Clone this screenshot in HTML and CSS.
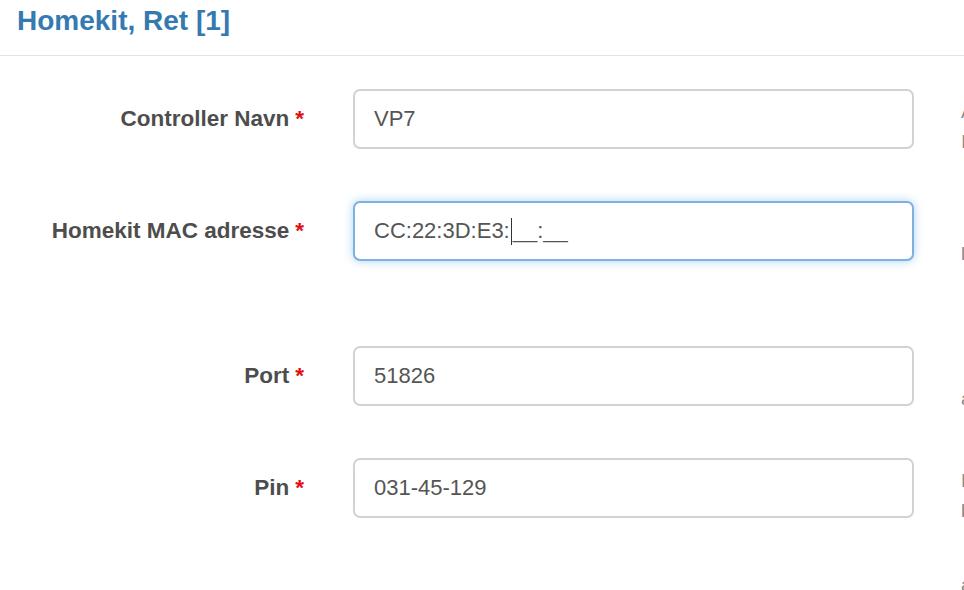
FILE: index.html
```html
<!DOCTYPE html>
<html lang="da">
<head>
<meta charset="utf-8">
<title>Homekit, Ret [1]</title>
<link rel="stylesheet" href="styles.css">
</head>
<body>
<header class="page-header">
  <h1 class="title">Homekit, Ret [1]</h1>
</header>
<form class="form">
  <div class="row">
    <label class="label">Controller Navn <span class="req">*</span></label>
    <div class="field">VP7</div>
    <div class="help">Angiv et navn til controlleren<br>Ikke synligt i Home appen</div>
  </div>
  <div class="row row-tall">
    <label class="label">Homekit MAC adresse <span class="req">*</span></label>
    <div class="field field-focus">CC:22:3D:E3:<span class="caret"></span>__:__</div>
    <div class="help">&nbsp;<br>lokal unik adresse</div>
  </div>
  <div class="row">
    <label class="label">Port <span class="req">*</span></label>
    <div class="field">51826</div>
    <div class="help">&nbsp;<br>angiv port</div>
  </div>
  <div class="row">
    <label class="label">Pin <span class="req">*</span></label>
    <div class="field">031-45-129</div>
    <div class="help">Pinkode til parring<br>bruges i Home appen</div>
  </div>
  <div class="row row-help-only">
    <div class="label"></div>
    <div></div>
    <div class="help">angiv</div>
  </div>
</form>
</body>
</html>
```
FILE: styles.css
```css
html, body {
  margin: 0;
  padding: 0;
  background: #ffffff;
}

body {
  font-family: "Liberation Sans", Arial, Helvetica, sans-serif;
  color: #555555;
  width: 964px;
  height: 590px;
  overflow: hidden;
}

.page-header {
  padding: 4px 17px 17px;
  border-bottom: 1px solid #e3e3e3;
}

.title {
  margin: 0;
  font-size: 28px;
  line-height: 34px;
  font-weight: bold;
  color: #3579b1;
}

.form {
  padding-top: 33px;
}

.row {
  display: grid;
  grid-template-columns: 306px 561px 200px;
  column-gap: 47px;
  margin-bottom: 52px;
  align-items: start;
}

.row-tall {
  margin-bottom: 85px;
}

.row-help-only {
  margin-bottom: 0;
}

.label {
  height: 60px;
  display: flex;
  align-items: center;
  justify-content: flex-end;
  padding-right: 2px;
  font-size: 22.5px;
  font-weight: bold;
  color: #4d4d4d;
  white-space: nowrap;
}

.req {
  color: #e20d0d;
  margin-left: 6px;
}

.field {
  box-sizing: border-box;
  height: 60px;
  display: flex;
  align-items: center;
  padding: 0 19px;
  border: 2px solid #d2d2d2;
  border-radius: 7px;
  font-size: 22px;
  color: #555555;
  background: #ffffff;
  white-space: nowrap;
}

.field-focus {
  border-color: #7fb0df;
  box-shadow: 0 0 10px rgba(102, 175, 233, 0.55);
}

.caret {
  display: inline-block;
  width: 1px;
  height: 27px;
  background: #333333;
  margin: 0 1px;
  vertical-align: middle;
}

.help {
  box-sizing: border-box;
  height: 60px;
  padding-top: 8px;
  font-size: 19px;
  line-height: 30px;
  color: #8a8a8a;
  white-space: nowrap;
}

.row-help-only .label {
  height: 0;
}

.row-help-only .help {
  padding-top: 0;
  height: 30px;
}
```
